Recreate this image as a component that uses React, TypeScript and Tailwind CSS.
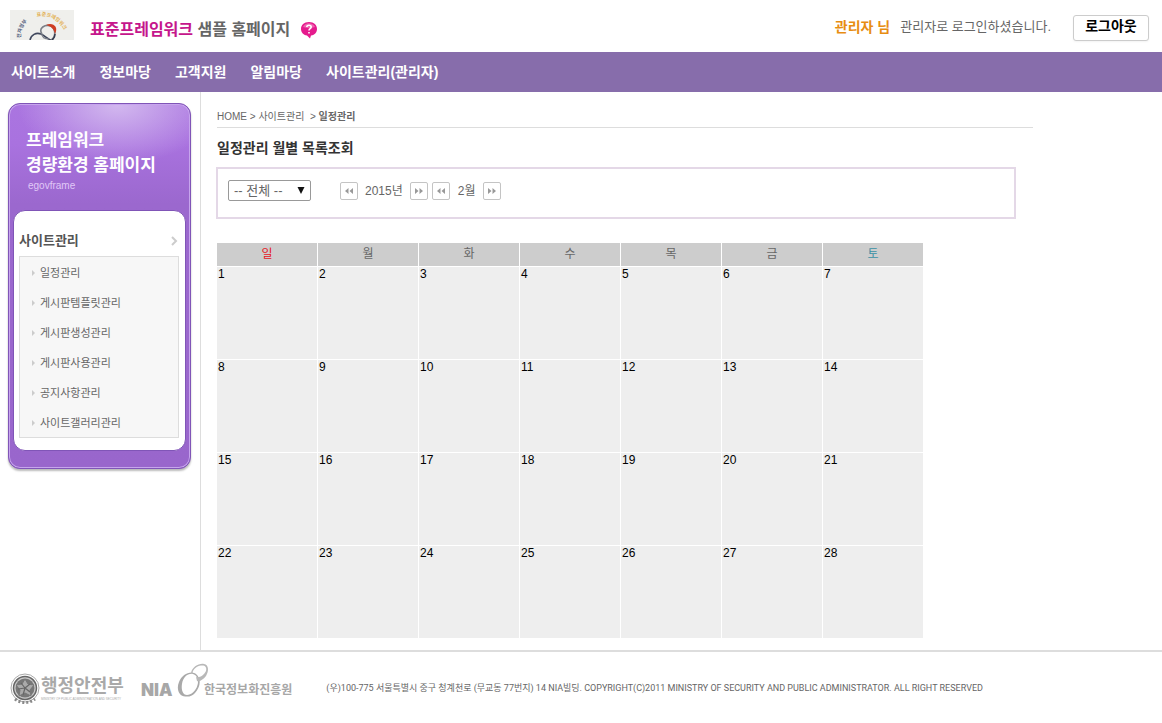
import React from "react";

const menus = ["사이트소개", "정보마당", "고객지원", "알림마당", "사이트관리(관리자)"];
const sideMenus = ["일정관리", "게시판템플릿관리", "게시판생성관리", "게시판사용관리", "공지사항관리", "사이트갤러리관리"];
const days = ["일", "월", "화", "수", "목", "금", "토"];
const weeks = [0, 1, 2, 3].map((w) => days.map((_, d) => w * 7 + d + 1));

function Emblem() {
  return (
    <svg width="64" height="30" viewBox="0 0 64 30" aria-hidden="true">
      <rect width="64" height="30" fill="#efefec" />
      <path id="emblem-left" d="M11 28 A22 22 0 0 1 25 6" fill="none" />
      <path id="emblem-right" d="M27 6.5 A24 24 0 0 1 56 28" fill="none" />
      <text fontSize="5" fontWeight="700" fill="#4c5678"><textPath href="#emblem-left">전자정부</textPath></text>
      <text fontSize="5" fontWeight="700" fill="#e3b050"><textPath href="#emblem-right">표준프레임워크</textPath></text>
      <path d="M20 30 C21 25 26 22 31 24 C36 26 38 31 43 30" fill="none" stroke="#3f475c" strokeWidth="1.6" />
      <path d="M32 24 C28 18 35 14 41 16 C46 19 46 27 41 30" fill="none" stroke="#7c8088" strokeWidth="1.6" />
      <path d="M32 24 C32 28 35 29 39 29" fill="none" stroke="#7c8088" strokeWidth="1.2" />
      <path d="M36 15 C43 12 49 17 45 24 C44 19 41 16 36 15Z" fill="#cf3d22" />
      <path d="M45 24 Q45 28 42 30" fill="none" stroke="#333a4d" strokeWidth="1.5" />
    </svg>
  );
}

function HelpIcon() {
  return (
    <svg width="18" height="18" viewBox="0 0 18 18" aria-hidden="true">
      <path d="M9 1 C4 1 1 4 1 8 C1 11 3 14 7 14.5 L10 17.5 L11 14.5 C15 14 17 11 17 8 C17 4 14 1 9 1Z" fill="#e51b8d" />
      <path d="M3 6 C5 1 13 1 15 6 C11 7.5 7 7.5 3 6Z" fill="#ef62b0" />
      <path d="M6.8 6 C6.8 3.6 11.2 3.6 11.2 6 C11.2 7.8 9 7.5 9 9.5 M9 11 V12.6" stroke="#fff" strokeWidth="1.6" fill="none" />
    </svg>
  );
}

function Arrows({ next = false, label }: { next?: boolean; label: string }) {
  return (
    <button type="button" aria-label={label} className="flex size-[18px] items-center justify-center rounded-xs border border-[#c4c4c4] bg-white">
      <svg width="8" height="6" viewBox="0 0 8 6" className={next ? "rotate-180" : ""} aria-hidden="true">
        <path d="M3.5 0 L0 3 L3.5 6Z M8 0 L4.5 3 L8 6Z" fill="#999" />
      </svg>
    </button>
  );
}

function SecurityLogo() {
  return (
    <div className="flex w-[116px] items-center gap-px">
      <svg width="30" height="32" viewBox="0 0 30 32" className="shrink-0" aria-hidden="true">
        <circle cx="15" cy="16" r="14" fill="none" stroke="#aaa" strokeWidth="1" />
        <circle cx="15" cy="16" r="11.5" fill="#c8c8c8" stroke="#666" strokeWidth="1.5" />
        <circle cx="15" cy="16" r="9.5" fill="#777" />
        <path d="M15 7 L18 12 L24 13 L20 18 L21 24 L15 21 L9 24 L10 18 L6 13 L12 12Z" fill="#aaa" stroke="#777" />
        <path d="M15 16 L11 11 M15 16 L20 12 M15 16 L20 20 M15 16 L13 23 M15 16 L8 17" stroke="#666" strokeWidth="1.2" />
        <path d="M5 27 Q15 34 25 27" fill="none" stroke="#888" strokeWidth="3" strokeDasharray="2 2" />
      </svg>
      <div className="flex flex-col whitespace-nowrap text-[#a9a9a9]">
        <span className="text-[18px] leading-[22px] font-bold">행정안전부</span>
        <span className="text-[3px] leading-[4px]">MINISTRY OF PUBLIC ADMINISTRATION AND SECURITY</span>
      </div>
    </div>
  );
}

function NiaLogo() {
  return (
    <div className="flex items-end text-[#a7a7a7]">
      <span className="w-9 font-[Inter] text-[17px] leading-[14px] font-black">NIA</span>
      <svg width="32" height="34" viewBox="0 0 32 34" className="mr-[-5px] shrink-0" aria-hidden="true">
        <path fillRule="evenodd" fill="#a9a9a9" d="M9 33.5 C2 34 -1 26 2 19 C5 11 14 7 19 11 C25 16 23 25 18 30 C15 33 12 34 9 33.5Z M10 32 C14 32 19 28 20.5 22 C22 17 20 12 16 11 C11 10 6 14 5 21 C4 27 6 32 10 32Z" />
        <path fillRule="evenodd" fill="#b8b8b8" d="M14 10 C15 4 22 0 27 1 C32 2 32 8 29 13 C26 17 22 19 20 18 L19 14 C23 15 27 12 29 8 C30 4 28 2 24 2.5 C20 3 16 6 15.5 10Z" />
      </svg>
      <span className="text-[12px] leading-[14px] font-bold whitespace-nowrap">한국정보화진흥원</span>
    </div>
  );
}

export default function App() {
  return (
    <div className="flex min-h-screen flex-col bg-white font-['Liberation_Sans','Noto_Sans_CJK_KR',sans-serif] text-[12px] leading-[16px] text-[#666]">
      <header className="flex h-[52px] items-start justify-between pr-[13px] pl-[10px]">
        <div className="flex items-start gap-4">
          <a href="#" aria-label="홈" className="pt-[10px]"><Emblem /></a>
          <h1 className="flex items-center gap-[10px] pt-5 text-[16px] leading-[20px] font-bold">
            <span><span className="text-[#c5168c]">표준프레임워크</span> 샘플 홈페이지</span><HelpIcon />
          </h1>
        </div>
        <div className="flex items-start pt-[15px]">
          <strong className="mt-1 mr-[10px] text-[14px] text-[#e78d12]">관리자 님</strong>
          <span className="mt-1 mr-[22px] text-[13px]">관리자로 로그인하셨습니다.</span>
          <button type="button" className="h-[26px] w-[76px] rounded-[3px] border border-[#ccc] bg-white pb-1 text-[14px] font-bold text-black shadow-xs">로그아웃</button>
        </div>
      </header>
      <nav className="flex h-10 items-center gap-6 bg-[#876dab] px-[11px] text-[14px] font-bold text-white">
        {menus.map((m) => <a key={m} href="#">{m}</a>)}
      </nav>
      <div className="flex flex-1">
        <aside className="w-[201px] shrink-0 border-r border-[#ddd] pt-[11px] pl-2">
          <div className="w-[183px] rounded-[12px] border border-[#8055b7] bg-[#9966cc] bg-[radial-gradient(ellipse_100px_60px_at_60%_0%,#d3b9efff_0%,#d3b9ef00_100%),linear-gradient(#aa75e0_0px,#a972df_40px,#9b68ce_100px,#9966cc_100%)] px-1 pb-[17px] shadow-[inset_0_0_0_1px_#c7a5ed,0_2px_2px_#bbb]">
            <div className="h-[106px] pt-6 pl-[13px] text-white">
              <h2 className="text-[17px] leading-[25px] font-bold">프레임워크<br />경량환경 홈페이지</h2>
              <p className="pl-0.5 text-[10px] leading-[16px] text-[#e0c8f7]">egovframe</p>
            </div>
            <div className="rounded-[12px] border border-[#8055b7] bg-white pt-[22px] pr-[6px] pb-3 pl-[5px]">
              <h3 className="mb-[7px] flex items-center justify-between pr-px text-[13px] leading-[16px] font-bold text-[#555]">
                사이트관리
                <svg width="7" height="10" viewBox="0 0 7 10" aria-hidden="true"><path d="M1 1 L5 5 L1 9" fill="none" stroke="#ccc" strokeWidth="2" /></svg>
              </h3>
              <ul className="border border-[#ddd] bg-[#f7f7f7]">
                {sideMenus.map((m) => (
                  <li key={m} className="flex h-[30px] items-center pt-px pl-3">
                    <svg width="8" height="6" viewBox="0 0 8 6" aria-hidden="true"><path d="M0 0 L3 3 L0 6Z" fill="#ccc" /></svg>
                    <a href="#" className="text-[11px]">{m}</a>
                  </li>
                ))}
              </ul>
            </div>
          </div>
        </aside>
        <main className="min-w-0 flex-1 pt-4 pr-[129px] pb-3 pl-4">
          <div className="h-5 border-b border-[#ddd] text-[10px] leading-[18px]">HOME &gt; 사이트관리 &nbsp;&gt; <strong>일정관리</strong></div>
          <h2 className="mt-[11px] text-[14px] leading-[18px] font-bold text-[#333]">일정관리 월별 목록조회</h2>
          <form className="mt-[10px] mr-[17px] -ml-px flex h-[52px] items-start border-2 border-[#e4d8e7] pt-[11px] pl-[10px]">
            <div className="relative">
              <select aria-label="일정구분" className="block h-[21px] w-[83px] appearance-none rounded-xs border border-[#999] bg-white pl-[5px] text-[13px] leading-[16px]"><option>-- 전체 --</option></select>
              <svg width="8" height="7" viewBox="0 0 8 7" className="pointer-events-none absolute top-[7px] right-[6px]" aria-hidden="true"><path d="M0.5 0 H7.5 L4 7Z" fill="#111" /></svg>
            </div>
            <div className="ml-[29px] flex items-center pt-0.5">
              <Arrows label="이전해" /><span className="px-[7px]">2015년</span><Arrows next label="다음해" />
              <span className="w-1" /><Arrows label="이전달" /><span className="px-2">2월</span><Arrows next label="다음달" />
            </div>
          </form>
          <table className="mt-6 w-[707px] table-fixed border-separate border-spacing-0">
            <thead><tr className="h-[23px]">
              {days.map((d, i) => <th key={d} className={`border-r border-white bg-[#cdcdcd] p-0 pb-0.5 font-normal ${i === 0 ? "text-[#e51522]" : i === 6 ? "text-[#3a91a5]" : ""}`}>{d}</th>)}
            </tr></thead>
            <tbody>{weeks.map((w) => <tr key={w[0]} className="h-[93px] text-black">
              {w.map((d) => <td key={d} className="border-t border-r border-white bg-[#eee] p-0 pl-px align-top leading-[14px]">{d}</td>)}
            </tr>)}</tbody>
          </table>
        </main>
      </div>
      <footer className="flex h-[73px] items-center border-t-2 border-[#ddd] pl-[10px]">
        <SecurityLogo />
        <div className="ml-[15px] pb-[15px]"><NiaLogo /></div>
        <address className="ml-[34px] font-[Roboto,'Noto_Sans_CJK_KR',sans-serif] text-[9px] not-italic">(우)100-775 서울특별시 중구 청계천로 (무교동 77번지) 14 NIA빌딩. COPYRIGHT(C)2011 MINISTRY OF SECURITY AND PUBLIC ADMINISTRATOR. ALL RIGHT RESERVED</address>
      </footer>
    </div>
  );
}
